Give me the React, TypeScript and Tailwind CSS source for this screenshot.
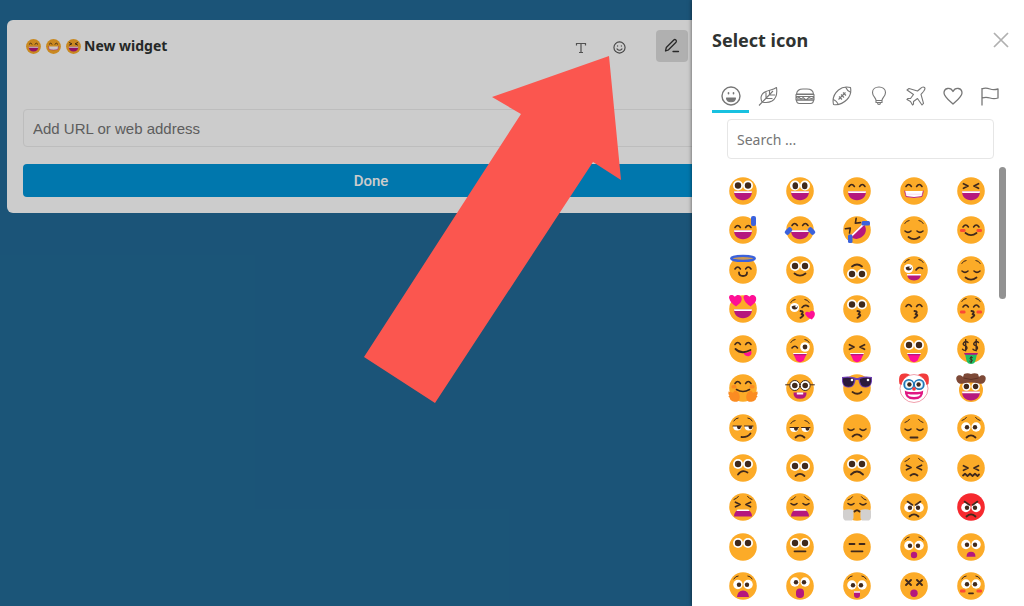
import type { ReactNode } from 'react';

const INK = '#40291c';
const MOUTH = '#b5177e';
const PINK = '#ff0f95';
const BLUE = '#3b62dc';

// All faces are drawn on a 28 x 28 grid
function Face({ children, color = '#fcab28' }: { children: ReactNode; color?: string }) {
  return (
    <>
      <circle cx="14" cy="14" r="13.8" fill={color} />
      {children}
    </>
  );
}

function Line({ d, w = 1.6, color = INK }: { d: string; w?: number; color?: string }) {
  return <path d={d} fill="none" stroke={color} strokeWidth={w} strokeLinecap="round" strokeLinejoin="round" />;
}

function Eyes({ y = 8.5, r = 5, p = 3.2, gap = 5 }: { y?: number; r?: number; p?: number; gap?: number }) {
  return (
    <>
      <circle cx={14 - gap} cy={y} r={r} fill="#fff" />
      <circle cx={14 + gap} cy={y} r={r} fill="#fff" />
      <circle cx={14 - gap} cy={y} r={p} fill={INK} />
      <circle cx={14 + gap} cy={y} r={p} fill={INK} />
    </>
  );
}

function SideEyes({ y = 13 }: { y?: number }) {
  return (
    <>
      <circle cx="8.9" cy={y} r="4.7" fill="#fff" />
      <circle cx="19.1" cy={y} r="4.7" fill="#fff" />
      <circle cx="10" cy={y + 0.3} r="2.2" fill={INK} />
      <circle cx="18" cy={y + 0.3} r="2.2" fill={INK} />
    </>
  );
}

const Happy = ({ y = 9.5 }: { y?: number }) => <Line d={`M6 ${y}q2.7-4 5.4 0M16.6 ${y}q2.7-4 5.4 0`} />;
const Closed = ({ y = 15 }: { y?: number }) => <Line d={`M5 ${y}q3 2.6 6 0M17 ${y}q3 2.6 6 0`} />;
const Squint = ({ y = 9 }: { y?: number }) => (
  <Line w={1.8} d={`M6.5 ${y - 2.2}l4.5 2.2l-4.5 2.2M21.5 ${y - 2.2}l-4.5 2.2l4.5 2.2`} />
);
const Worry = ({ y = 6 }: { y?: number }) => <Line w={1} d={`M5 ${y + 2}q3-.8 4.5-3.2M23 ${y + 2}q-3-.8-4.5-3.2`} />;
const Brows = ({ y = 6 }: { y?: number }) => <Line w={1} d={`M4.8 ${y + 1.5}q1.7-3 4.3-3M23.2 ${y + 1.5}q-1.7-3-4.3-3`} />;
const Smile = ({ y = 19 }: { y?: number }) => <Line w={1.8} d={`M8.5 ${y}q5.5 4.2 11 0`} />;
const Frown = ({ y = 22 }: { y?: number }) => <Line w={1.8} d={`M9.5 ${y}q4.5-4.2 9 0`} />;
const Kiss = () => <Line w={1.9} d="M14.5 16q4 .5 1 3.2q4 .8-1 3.6" />;

function Laugh({ y = 14.3 }: { y?: number }) {
  return (
    <g transform={`translate(0 ${y - 14.3})`}>
      <path d="M5 14.3h18c0 5.400-3.500 9-9 9s-9-3.600-9-9z" fill={MOUTH} />
      <path d="M5 14.3h18l-.3 1.800H5.300z" fill="#fff" />
    </g>
  );
}

function Tongue() {
  return (
    <>
      <path d="M7 18h14l-.6 1.600H7.600z" fill="#fff" />
      <path d="M7.500 19.300h13l-2.800 6q-3.700 3.800-7.400 0z" fill={PINK} />
      <path d="M7.200 19h13.600l-1 1.200H8.200z" fill={MOUTH} />
    </>
  );
}

function Blush({ y = 17 }: { y?: number }) {
  return (
    <g fill="#fb4934">
      <rect x="3" y={y - 1.6} width="5.5" height="3.2" rx="1.4" />
      <rect x="19.5" y={y - 1.6} width="5.5" height="3.2" rx="1.4" />
    </g>
  );
}

// Half-lidded pair, both pupils looking right
function Bored({ y }: { y: number }) {
  return (
    <g transform={`translate(0 ${y})`}>
      <path d="M4 0h8.500q0 4.500-4.200 4.500T4 0zM15.500 0H24q0 4.500-4.200 4.500T15.500 0z" fill="#fff" />
      <path d="M8 0h4q0 3.200-2 3.200T8 0zM19.500 0h4q0 3.200-2 3.200t-2-3.200z" fill={INK} />
      <Line w={1} d="M4 0h8.500M15.500 0H24" />
    </g>
  );
}

function HalfEye() {
  return (
    <>
      <circle cx="8.5" cy="12.500" r="4.6" fill="#fff" />
      <path d="M5.700 11.500q3-1.800 6 0a3 3 0 11-6 0z" fill={INK} />
      <circle cx="10.200" cy="11.600" r=".9" fill="#fff" />
    </>
  );
}

const HEART = 'M0 3.5C-2-.5 3-2 5.3 1.2 8-2 12.6-.2 12.2 3.8 11.8 8 8 9.5 6.5 11 4.5 9.2 1 7.5 0 3.5z';

const EMOJIS: { name: string; art: ReactNode }[] = [
  { name: 'Grinning', art: <Face><Eyes /><Laugh /></Face> },
  {
    name: 'Smiley',
    art: (
      <Face>
        <Eyes p={0} />
        <ellipse cx="9.3" cy="8.800" rx="2.800" ry="3.500" fill={INK} />
        <ellipse cx="18.7" cy="8.800" rx="2.800" ry="3.500" fill={INK} />
        <Laugh />
      </Face>
    ),
  },
  { name: 'Smile', art: <Face><Happy /><Laugh /></Face> },
  {
    name: 'Beaming',
    art: (
      <Face>
        <Happy />
        <path d="M4.700 14h18.600l-1.300 5.500q-8 2-16 0z" fill="#fff" />
        <Line w={0.9} color={MOUTH} d="M4.700 14l1.300 5.500q8 2 16 0l1.300-5.500" />
        <Line w={0.4} color="#f7a1ce" d="M5.500 17.200h17" />
      </Face>
    ),
  },
  { name: 'Laughing', art: <Face><Squint /><Laugh /></Face> },
  {
    name: 'Sweat smile',
    art: (
      <Face>
        <Happy y={11.5} />
        <Laugh />
        <rect x="22" y="0" width="5" height="10" rx="2" fill={BLUE} />
      </Face>
    ),
  },
  {
    name: 'Tears of joy',
    art: (
      <Face>
        <Happy />
        <Laugh />
        <rect x="-1.500" y="12.500" width="8" height="5" rx="2" fill={BLUE} transform="rotate(-45 2.5 15)" />
        <rect x="21.500" y="12.500" width="8" height="5" rx="2" fill={BLUE} transform="rotate(45 25.5 15)" />
      </Face>
    ),
  },
  {
    name: 'Rolling on the floor',
    art: (
      <Face>
        <g transform="rotate(-44 14 14)">
          <Line d="M6.500 5l4 3-4 3M21.500 5l-4 3 4 3" />
          <Laugh y={13.5} />
        </g>
        <rect x="5" y="18.500" width="4.500" height="8.500" rx="1.500" fill={BLUE} />
        <rect x="18.500" y="5" width="8.500" height="4.500" rx="1.500" fill={BLUE} />
      </Face>
    ),
  },
  { name: 'Relieved', art: <Face><Brows /><Closed /><Smile y={21} /></Face> },
  { name: 'Blush', art: <Face><Happy y={11} /><Blush y={14.5} /><Smile y={17} /></Face> },
  {
    name: 'Halo',
    art: (
      <Face>
        <ellipse cx="14" cy="2.400" rx="11.800" ry="2.500" fill="#cb9955" stroke={BLUE} strokeWidth="2.400" />
        <Happy y={13} />
        <Line w={1.8} d="M10 16.500q0 3.500 4 3.500t4-3.500" />
      </Face>
    ),
  },
  { name: 'Slight smile', art: <Face><Eyes y={10} /><Smile y={17.5} /></Face> },
  { name: 'Upside down', art: <Face><Line w={1.8} d="M9 10.500q5-4 10 0" /><Eyes y={18} /></Face> },
  {
    name: 'Wink',
    art: (
      <Face>
        <Brows y={5} />
        <HalfEye />
        <Line d="M16 14q2.500-4 6.500-1.500" />
        <path d="M7 18h14q-.5 6.500-7 6.500T7 18z" fill={MOUTH} />
        <path d="M7 18h14v1.500H7z" fill="#fff" />
      </Face>
    ),
  },
  { name: 'Pleased', art: <Face><Brows /><Closed /><Smile y={21.5} /></Face> },
  {
    name: 'Heart eyes',
    art: (
      <Face>
        <Laugh />
        <path d={HEART} fill={PINK} transform="translate(.5 .5)" />
        <path d={HEART} fill={PINK} transform="translate(15 .5)" />
      </Face>
    ),
  },
  {
    name: 'Blowing a kiss',
    art: (
      <Face>
        <Brows y={6} />
        <HalfEye />
        <Line d="M16 12.500q3-3.500 6.500-1" />
        <Kiss />
        <path d={HEART} fill={PINK} transform="translate(19.300 17.500) scale(.75) rotate(-12)" />
      </Face>
    ),
  },
  { name: 'Kissing', art: <Face><Eyes y={9.5} /><Kiss /></Face> },
  { name: 'Kissing with smiling eyes', art: <Face><Happy y={11.5} /><Kiss /></Face> },
  { name: 'Kissing with closed eyes', art: <Face><Brows y={5} /><Happy y={12} /><Blush /><Kiss /></Face> },
  {
    name: 'Yum',
    art: (
      <Face>
        <Happy />
        <path d="M14.500 18c3 .4 6-1 7.500-2.600 2.500 6-5 8-7.500 2.600z" fill={PINK} />
        <Line w={1.8} d="M6.500 14q6 6 15 1" />
      </Face>
    ),
  },
  {
    name: 'Winking with tongue',
    art: (
      <Face>
        <Brows y={6} />
        <Line d="M6 13q3-3.500 5.500 0" />
        <circle cx="19" cy="12" r="4.800" fill="#fff" />
        <circle cx="19" cy="12" r="2.400" fill={INK} />
        <Tongue />
      </Face>
    ),
  },
  { name: 'Squinting with tongue', art: <Face><Squint y={12} /><Tongue /></Face> },
  { name: 'Tongue out', art: <Face><Eyes y={10} /><Tongue /></Face> },
  {
    name: 'Money mouth',
    art: (
      <Face>
        <Line w={1.4} d="M11 7.500q-2-2-4 0t1 3.200 1.500 3.500-4 0M8.700 4.800v11M21.500 7.500q-2-2-4 0t1 3.200 1.500 3.500-4 0M19.200 4.800v11" />
        <path d="M8 19h12l-1.500 6.500q-1 3.500-4.500 3.500t-4.500-3.500z" fill="#1fbf63" />
        <path d="M7 18h14l-.8 1.800H7.800z" fill={MOUTH} />
        <Line w={0.9} d="M15.500 22.500q-2-1-2.500.4t1.300 1.500.6 1.900-2.400 0M14.200 21.400v6.300" />
      </Face>
    ),
  },
  {
    name: 'Hugging',
    art: (
      <Face>
        <Happy />
        <g fill="#fb8c22">
          <rect x="2.500" y="11" width="5" height="3.500" rx="1.500" />
          <rect x="20.500" y="11" width="5" height="3.500" rx="1.500" />
          <path d="M-.5 17.500l4.500 1.300 2-2.300c3.500 1.200 5.500 4 4.500 8.500-.5 2.500-3 3-5 2.700-3-.4-4.700-2-4.800-4l-1.300-1.200 1-1-1-1.400z" />
          <path d="M28.500 17.500l-4.500 1.300-2-2.300c-3.500 1.200-5.500 4-4.500 8.500.5 2.500 3 3 5 2.700 3-.4 4.700-2 4.800-4l1.300-1.200-1-1 1-1.400z" />
        </g>
        <Line w={1.6} d="M7.500 15.500q6.500 4 13 0" />
      </Face>
    ),
  },
  {
    name: 'Nerd',
    art: (
      <Face>
        <Eyes y={11.5} r={5} p={2.8} gap={5.2} />
        <g fill="none" stroke={INK} strokeWidth="1">
          <circle cx="8.800" cy="11.500" r="5" />
          <circle cx="19.200" cy="11.500" r="5" />
          <path d="M-.8 10.800h4.600M24.200 10.800h4.600" />
        </g>
        <path d="M7.500 18.500h13q.5 6.300-6.500 6.300t-6.500-6.300z" fill={MOUTH} />
        <path d="M10.800 18.500h6.400v2h-6.400z" fill="#fff" />
      </Face>
    ),
  },
  {
    name: 'Sunglasses',
    art: (
      <Face>
        <path d="M-1 3q7-1.300 13 .4 2 1 4 0Q22 1.700 29 3v4.500C28 13 25 13.500 22 13.500c-4 0-6-3.500-6.500-7.500h-3C12 10 10 13.500 6 13.500 3 13.500 0 13-1 7.500z" fill="#6e3fb2" />
        <path d="M0 4.200q6-1 11.200.8 0 7.700-5.700 7.700T0 7zM28 4.200q-6-1-11.200.8 0 7.700 5.700 7.700T28 7z" fill="#2b1a3a" />
        <circle cx="9" cy="6" r="1.300" fill="#fff" />
        <circle cx="25" cy="6" r="1.300" fill="#fff" />
        <Line w={1.8} d="M9.500 18q5 3.500 9 0" />
      </Face>
    ),
  },
  {
    name: 'Clown',
    art: (
      <>
        <circle cx="14" cy="14.500" r="14" fill="#fff" stroke="#e85f76" strokeWidth=".6" />
        <path d="M-.5 10C-1.500 4-1-1 5-.5q3-.5 5 1.500Q3 3.500 1.500 11zM28.500 10C29.500 4 29-1 23-.5q-3-.5-5 1.500 7 2.500 8.500 10z" fill="#f23c3c" />
        <circle cx="8.800" cy="10.500" r="4.700" fill="#9bd8f3" stroke="#2475b5" strokeWidth="1.600" />
        <circle cx="19.200" cy="10.500" r="4.700" fill="#9bd8f3" stroke="#2475b5" strokeWidth="1.600" />
        <Eyes y={10.5} r={3.6} p={2.2} gap={4.600} />
        <circle cx="14" cy="14.800" r="1.900" fill="#f23c3c" />
        <path d="M4.800 16.500q2 1.500 9.200 1.500t9.200-1.500q.5 9-9.200 9t-9.200-9z" fill="#e01882" />
        <path d="M7.500 20q6.500 1 13 0-.5 3-6.500 3t-6.500-3z" fill="#fff" />
      </>
    ),
  },
  {
    name: 'Cowboy',
    art: (
      <>
        <circle cx="14" cy="16" r="12" fill="#fcab28" />
        <Eyes y={12.5} r={4.2} p={2.7} gap={4.600} />
        <Laugh y={17.5} />
        <path d="M-.5 6C-2 .5 4 0 6 3l1-3q3.500-1.500 7 0 3.500-1.500 7 0l1 3c2-3 8-2.500 6.500 3-.8 3.500-4.500 4.500-6.500 3.500q-8-2-16 0C4 10.500.3 9.500-.5 6z" fill="#7d4937" />
        <path d="M6.500 4q7.500 3 15 0" fill="none" stroke="#5e3327" strokeWidth="1" />
      </>
    ),
  },
  { name: 'Smirking', art: <Face><Brows y={5.5} /><Bored y={12} /><Line w={1.8} d="M12.500 23q6 .5 9-3.500" /></Face> },
  { name: 'Unamused', art: <Face><Brows y={8} /><Bored y={13.5} /><Frown y={23.5} /></Face> },
  { name: 'Disappointed', art: <Face><Closed y={15} /><Frown y={22.5} /></Face> },
  { name: 'Pensive', art: <Face><Worry y={6.5} /><Closed y={15} /><Line w={1.8} d="M10.500 23.500h7" /></Face> },
  { name: 'Worried', art: <Face><Worry y={4.5} /><SideEyes y={13} /><Frown y={23.5} /></Face> },
  { name: 'Confused', art: <Face><Eyes y={10} /><Line w={1.8} d="M9 20.500q4-5.500 9.500-2" /></Face> },
  { name: 'Slight frown', art: <Face><Eyes y={12} /><Frown y={22} /></Face> },
  { name: 'Frowning', art: <Face><Eyes y={10} /><Line w={1.8} d="M8 20.500q6-6 12 0" /></Face> },
  { name: 'Persevering', art: <Face><Worry y={5.5} /><Squint y={13.5} /><Line w={1.8} d="M10.500 21.500q3.500-3 7 0" /></Face> },
  {
    name: 'Confounded',
    art: <Face><Squint y={14} /><Line w={1.8} d="M6 21.500l2-1.700 2.500 2.200 2.500-2.200 2.500 2.200 2.500-2.200 2.500 2.200 1.500-1.500" /></Face>,
  },
  {
    name: 'Tired',
    art: (
      <Face>
        <Worry y={4.5} />
        <Squint y={11.5} />
        <path d="M5 23.500q.5-6.500 5-6.500h8q4.500 0 5 6.500z" fill={MOUTH} />
        <path d="M8.500 16.500h11l1 1.500h-13z" fill="#fff" />
      </Face>
    ),
  },
  {
    name: 'Weary',
    art: (
      <Face>
        <Worry y={5} />
        <Closed y={10.5} />
        <path d="M5 23.500q.5-6.500 5-6.500h8q4.500 0 5 6.500z" fill={MOUTH} />
        <path d="M8.500 16h11l1 1.800h-13z" fill="#fff" />
      </Face>
    ),
  },
  {
    name: 'Steam from nose',
    art: (
      <Face>
        <Worry y={5} />
        <Closed y={10.5} />
        <path d="M0 17.500q5-2 10.500-.5v7.500q0 2-1.500 3H2q-2-1.500-2-3.500zM28 17.500q-5-2-10.500-.5v7.500q0 2 1.500 3h7q2-1.500 2-3.500z" fill="#d2d0cf" />
        <Line w={1.8} d="M11.500 18.500q2.500-2.500 5 0" />
      </Face>
    ),
  },
  { name: 'Angry', art: <Face><SideEyes y={14.5} /><Line d="M7.500 8.500l5 3.500M20.500 8.500l-5 3.500" /><Frown y={23.5} /></Face> },
  {
    name: 'Enraged',
    art: <Face color="#f6292e"><SideEyes y={14.5} /><Line d="M7.500 8.500l5 3.500M20.500 8.500l-5 3.500" /><Frown y={23.5} /></Face>,
  },
  { name: 'No mouth', art: <Face><Eyes y={10} /></Face> },
  { name: 'Neutral', art: <Face><Eyes y={10} /><Line w={1.800} d="M8.500 18.300h11" /></Face> },
  { name: 'Expressionless', art: <Face><Line w={1.800} d="M6.500 11h5M16.500 11h5M8.500 18.300h11" /></Face> },
  {
    name: 'Hushed',
    art: <Face><Brows y={5.5} /><SideEyes y={12.5} /><circle cx="14" cy="22" r="3.200" fill={MOUTH} /></Face>,
  },
  {
    name: 'Frowning with open mouth',
    art: <Face><SideEyes y={11.5} /><path d="M9.500 23.800q0-5 4.500-5t4.500 5z" fill={MOUTH} /></Face>,
  },
  {
    name: 'Anguished',
    art: <Face><Brows y={5.5} /><SideEyes y={12.5} /><path d="M8 25q.5-6.500 6-6.500t6 6.500z" fill={MOUTH} /></Face>,
  },
  {
    name: 'Open mouth',
    art: <Face><SideEyes y={10} /><rect x="10" y="16.500" width="8" height="9.500" rx="3.800" fill={MOUTH} /></Face>,
  },
  {
    name: 'Astonished',
    art: (
      <Face>
        <Brows y={5.5} />
        <SideEyes y={13} />
        <path d="M11 19.500h6v3.500q0 3-3 3t-3-3z" fill={MOUTH} />
        <path d="M11 19.300h6v1.400h-6z" fill="#fff" />
      </Face>
    ),
  },
  {
    name: 'Dizzy',
    art: (
      <Face>
        <Line w={1.9} d="M6 8l5 5M11 8l-5 5M17 8l5 5M22 8l-5 5" />
        <circle cx="14" cy="21.300" r="3.700" fill={MOUTH} />
      </Face>
    ),
  },
  { name: 'Flushed', art: <Face><Brows y={5.5} /><SideEyes y={12} /><Blush y={19} /><Line w={1.8} d="M12 21.300h4" /></Face> },
];

const TABS: { name: string; icon: ReactNode }[] = [
  {
    name: 'Smileys',
    icon: (
      <>
        <circle cx="10" cy="10" r="9" strokeWidth="1.400" />
        <path d="M5.500 12h9c-.3 5-8.700 5-9 0z" fill="#777" />
        <path d="M7.500 6.800v1M12.500 6.800v1" strokeWidth="1.600" strokeLinecap="round" />
      </>
    ),
  },
  {
    name: 'Nature',
    icon: <path d="M1 19.500L15 5M4 16C1.500 11 4 7 8 5.500 12 4 15 4 18.500 1.500c1 6.500-.5 11-4.500 13.500-3 1.700-7 1.800-10 1zM8 12V6.500M11.500 8.500V4.500M8 12.300l6.500.2M11.500 8.700l5.500.3" />,
  },
  {
    name: 'Food',
    icon: (
      <>
        <path d="M1.500 8C2 4 4 3 8 3h4c4 0 6 1 6.500 5zM1.500 14h17c0 3-1 3.500-3 3.500h-11c-2 0-3-.5-3-3.500z" />
        <path d="M1 8.500h18v2H1zM1 10.500c1 2 2 2 3 1 2 2 3 1.500 4 0l3 2.500 3-2.500c2 1.500 4 1.500 5-1M1 11v3h18v-3" />
      </>
    ),
  },
  {
    name: 'Sports',
    icon: (
      <>
        <path d="M1.500 18.500C0 12 3 7 6.500 4 10 1 14 .5 18.500 1.500c1 5-.2 8.500-3.500 12-4 4-8 6-13.500 5z" />
        <path d="M1 13.500c2 .5 4.500 3 5.500 5.500M13.500 1c1 2.500 3 4.500 5.500 5.500M6.500 13.500l7-7M7 10.500l3 3M9 8.500l3 3M11 6.500l3 3" />
      </>
    ),
  },
  {
    name: 'Objects',
    icon: (
      <path d="M7 14.500c0-3-3.500-4-3.500-8C3.500 3 6.500 1 10 1s6.500 2 6.500 5.500c0 4-3.500 5-3.500 8zM7 14.500v2h6v-2M8.500 16.500c0 2.700 3 2.700 3 0" />
    ),
  },
  {
    name: 'Travel',
    icon: (
      <path d="M18.500 1.500c-1.300-1-3 0-4 1L11.500 5 3 2.500 1 4l6.500 4.500-3 4H2l-1 1 3.500 2L6.500 19l1-1v-2.500l4-3L16 19l1.500-1.700-2.500-9L17.500 5.500c1-1.200 2-3 1-4z" />
    ),
  },
  {
    name: 'Symbols',
    icon: <path d="M10 18C5 13.500 1 10.500 1 7c0-5 6.500-6.500 9-1.500C12.500.5 19 2 19 7c0 3.500-4 6.500-9 11z" strokeWidth="1.300" />,
  },
  { name: 'Flags', icon: <path d="M2 19.500V2M2 3c3-1.500 5-1 8 0s5 .8 8 0v9c-3 1-5 1-8 0s-5-1-8 0" strokeWidth="1.300" /> },
];

function Emoji({ art, className }: { art: ReactNode; className: string }) {
  return (
    <svg viewBox="0 0 28 28" className={className} aria-hidden="true">
      {art}
    </svg>
  );
}

function WidgetCard() {
  return (
    <section className="mr-[289px] ml-[7px] rounded-md bg-white px-4 pt-2.5 pb-4">
      <div className="flex h-8 items-center">
        <div className="ml-[3px] flex items-center gap-[5px]">
          <Emoji art={EMOJIS[2].art} className="size-[15px]" />
          <Emoji art={EMOJIS[3].art} className="size-[15px]" />
          <Emoji art={EMOJIS[4].art} className="size-[15px]" />
        </div>
        <h1 className="ml-[3px] font-['Noto_Sans'] text-sm font-bold text-[#2f3331]">New widget</h1>
        <div className="mr-[31px] ml-auto flex items-center gap-[22px]">
          <button aria-label="Text" className="flex h-4 w-4 items-end justify-center">
            <svg viewBox="0 0 12 12" className="size-3" fill="none" stroke="#666" strokeWidth="1.200">
              <path d="M1.500 3.500V1.500h9v2M6 1.500v9M4 10.500h4" />
            </svg>
          </button>
          <button aria-label="Icon" className="flex h-4 w-4 items-end justify-center">
            <svg viewBox="0 0 14 14" className="size-[13px]" fill="none" stroke="#555" strokeWidth="1.200" strokeLinecap="round">
              <circle cx="7" cy="7" r="6" />
              <path d="M4.300 8.500q2.700 3 5.400 0M5 5.200v.3M9 5.200v.3" />
            </svg>
          </button>
          <button aria-label="Edit" className="ml-[7px] flex size-8 items-center justify-center rounded bg-[#dddddd]">
            <svg viewBox="0 0 16 16" className="size-4" fill="none" stroke="#333" strokeWidth="1.300" strokeLinecap="round" strokeLinejoin="round">
              <path d="M1.500 13l.8-3.500 7.500-7.500c1.300-1.300 3.500.7 2.200 2.200l-7.500 7.600zM9 13.500h5.500" />
            </svg>
          </button>
        </div>
      </div>
      <input
        type="text"
        aria-label="URL"
        placeholder="Add URL or web address"
        className="mt-[47px] block h-[38px] w-full rounded border border-[#ededed] px-[9px] font-['Liberation_Sans'] text-[15px] placeholder:text-[#757575]"
      />
      <button className="mt-[17px] block h-[33px] w-full rounded bg-[#0095d9] pt-0.5 font-[Roboto] text-[15px] font-medium text-white">
        Done
      </button>
    </section>
  );
}

function IconPanel() {
  return (
    <aside className="absolute inset-y-0 right-0 flex w-[332px] flex-col bg-white font-['Noto_Sans'] shadow-[0_0_4px_rgba(0,0,0,0.6)]">
      <header className="flex h-20 items-center justify-between pr-[15px] pl-5">
        <h2 className="text-lg font-bold text-[#2f3331]">Select icon</h2>
        <button aria-label="Close">
          <svg viewBox="0 0 16 16" className="size-4" stroke="#b0b0b0" strokeWidth="1.700">
            <path d="M1 1l14 14M15 1L1 15" />
          </svg>
        </button>
      </header>
      <nav className="mr-4 ml-5 grid h-[33px] grid-cols-8">
        {TABS.map((tab, i) => (
          <button
            key={tab.name}
            aria-label={tab.name}
            className={`flex items-center justify-center border-b-3 pt-0.5 ${i === 0 ? 'border-[#18c1e0]' : 'border-transparent'}`}
          >
            <svg viewBox="0 0 20 20" className="size-5" fill="none" stroke="#777" strokeWidth="1.100" strokeLinejoin="round">
              {tab.icon}
            </svg>
          </button>
        ))}
      </nav>
      <input
        type="search"
        aria-label="Search icons"
        placeholder="Search ..."
        className="mt-1.5 mr-[30px] ml-[35px] h-10 shrink-0 rounded border border-[#e6e6e6] px-[9px] text-sm placeholder:text-[#757575]"
      />
      <div className="mt-3 mr-[18px] ml-[23px] flex min-h-0 flex-1">
        <div className="grid flex-1 auto-rows-fr grid-cols-5">
          {EMOJIS.map((emoji) => (
            <button key={emoji.name} aria-label={emoji.name} className="flex items-center justify-center">
              <Emoji art={emoji.art} className="size-7 overflow-visible" />
            </button>
          ))}
        </div>
        <div className="-mt-1 h-[132px] w-[7px] rounded-full bg-[#929292]" />
      </div>
    </aside>
  );
}

export default function App() {
  return (
    <main className="relative h-screen min-h-[600px] overflow-hidden bg-[#226a96] pt-5">
      <WidgetCard />
      <div className="absolute inset-0 bg-black/20" />
      <svg viewBox="0 0 257 347" className="absolute top-14 left-[364px] w-[257px]" aria-hidden="true">
        <path d="M245 0L128 41l29 17L0 301l71 46 158-241 28 18z" fill="#fb564f" />
      </svg>
      <IconPanel />
    </main>
  );
}
